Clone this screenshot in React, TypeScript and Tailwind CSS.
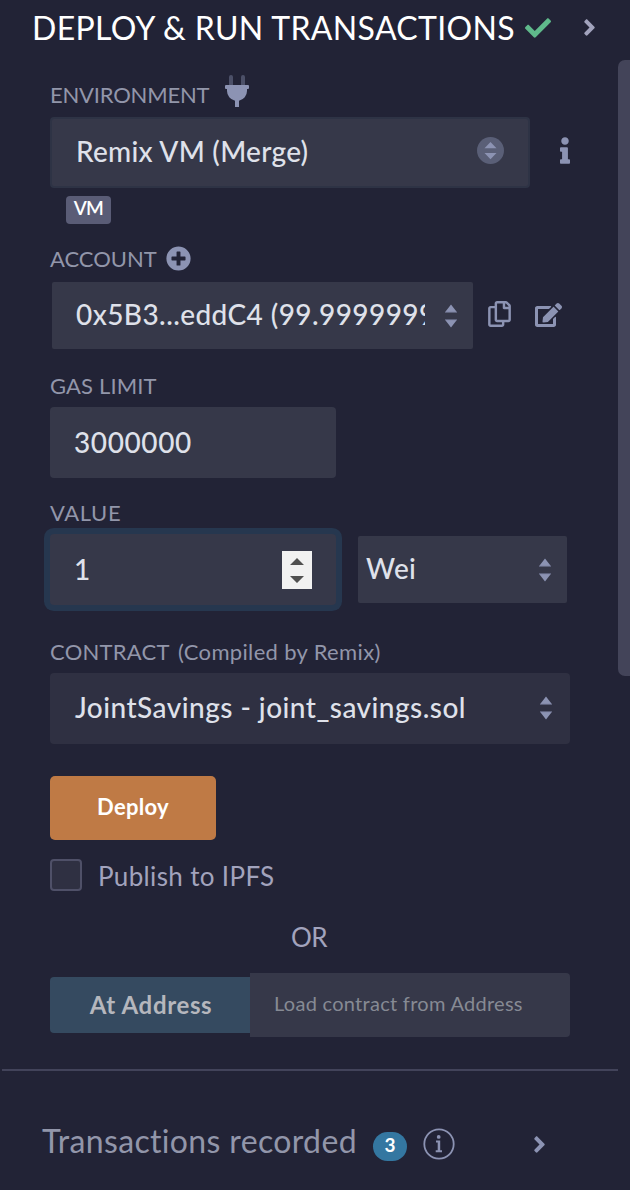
import type { ReactNode } from "react";
import { FaAngleRight, FaCheck, FaEdit, FaInfo, FaPlusCircle, FaRegCopy } from "react-icons/fa";

function PlugIcon() {
  return (
    <svg viewBox="0 0 384 512" className="h-8 w-6 shrink-0 fill-[#8c93b3]">
      <path
        className="opacity-40"
        d="M320 32a32 32 0 0 0-64 0v128h64zM128 32a32 32 0 0 0-64 0v128h64z"
      />
      <path d="M368 160H16a16 16 0 0 0-16 16v32a16 16 0 0 0 16 16h16v32a160.07 160.07 0 0 0 128 156.8V512h64v-99.200A160.07 160.07 0 0 0 352 256v-32h16a16 16 0 0 0 16-16v-32a16 16 0 0 0-16-16z" />
    </svg>
  );
}

function SortArrows() {
  return (
    <svg viewBox="0 0 12 24" className="h-6 w-3 shrink-0">
      <path d="M0 8.300 6 0.500l6 7.800zM0 15.700h12L6 23.500z" fill="#8c93b3" />
      <path d="M0 8.300h12M0 15.700h12" stroke="#6a6f8b" strokeWidth="0.800" />
    </svg>
  );
}

function CircledSort() {
  return (
    <svg viewBox="0 0 27 27" className="h-[27px] w-[27px] shrink-0">
      <circle cx="13.500" cy="13.500" r="13.500" fill="#5a5f77" />
      <path d="M7.500 11.200 13.500 5l6 6.200zM7.500 16h12l-6 6.200z" fill="#8c93b3" />
    </svg>
  );
}

function InfoCircle() {
  return (
    <svg viewBox="0 0 32 32" className="h-8 w-8 shrink-0">
      <circle cx="16" cy="16" r="14.700" fill="none" stroke="#8c93b3" strokeWidth="1.800" />
      <circle cx="15.700" cy="8.900" r="1.900" fill="#8c93b3" />
      <path d="M13 12.600h4.200v9.600h1.800v2h-6.300v-2h2v-7.600H13z" fill="#8c93b3" />
    </svg>
  );
}

function Label({ children, className }: { children: ReactNode; className: string }) {
  return (
    <div className={`flex items-center whitespace-pre text-[22px] leading-[26px] text-[#9296aa] ${className}`}>
      {children}
    </div>
  );
}

export default function App() {
  return (
    <div className="flex h-[1190px] w-[630px] flex-col overflow-hidden bg-[#222336] font-['Lato',sans-serif] text-[28px] text-[#dfe1ea]">
      <header className="flex h-[60px] shrink-0 items-start pl-8 text-white">
        <h1 className="w-[493px] whitespace-nowrap pt-[9px] text-[32px] leading-[38px] tracking-[0.34px]">
          DEPLOY &amp; RUN TRANSACTIONS
        </h1>
        <FaCheck className="mt-[15px] h-[26px] w-[26px] shrink-0 text-[#5fb98b]" />
        <FaAngleRight className="mt-[14px] ml-8 h-[27px] w-[13px] shrink-0 text-[#a2a3bd]" />
      </header>

      <div className="flex min-h-0 flex-1">
        <main className="flex w-[618px] shrink-0 flex-col">
          <section className="flex flex-col pl-[50px]">
            <Label className="mt-[15px] h-8">
              <span className="w-[175px] pt-[7px] tracking-[-0.2px]">ENVIRONMENT</span>
              <PlugIcon />
            </Label>
            <div className="mt-[10px] flex items-center">
              <div className="flex h-[71px] w-[480px] items-center justify-between rounded-[4px] border-2 border-[#2e3345] bg-[#363849] pr-[24px] pb-[4px] pl-[24px]">
                <span className="font-medium tracking-[0.27px]">Remix VM (Merge)</span>
                <CircledSort />
              </div>
              <FaInfo className="mb-1 ml-[30px] h-[27px] w-[10px] text-[#8c93b3]" />
            </div>
            <span className="mt-2 ml-4 flex h-7 w-[45px] items-center justify-center rounded-[4px] bg-[#5a5c76] pb-[3px] text-[19px] font-semibold tracking-[-0.6px] text-white">
              VM
            </span>

            <Label className="mt-[21px] h-[27px]">
              <span className="w-[116px]">ACCOUNT</span>
              <FaPlusCircle className="h-[25px] w-[25px] text-[#8c93b3]" />
            </Label>
            <div className="mt-[10px] ml-[2px] flex items-center">
              <div className="flex h-[67px] w-[421px] items-center rounded-[2px] bg-[#363849] pl-6">
                <span className="mb-[3px] w-[349px] overflow-hidden whitespace-nowrap font-medium tracking-[0.42px]">
                  0x5B3...eddC4 (99.99999999 ether)
                </span>
                <span className="ml-5">
                  <SortArrows />
                </span>
              </div>
              <FaRegCopy className="mb-[3px] ml-[15px] h-[26px] w-[23px] text-[#8c93b3]" />
              <FaEdit className="mb-[2px] ml-6 h-[24px] w-[27px] text-[#8c93b3]" />
            </div>

            <Label className="mt-[24px]">
              <span className="tracking-[0.14px]">GAS LIMIT</span>
            </Label>
            <div className="mt-2 flex h-[71px] w-[286px] items-center rounded-[4px] bg-[#363849] pb-[2px] pl-[24px] font-medium tracking-[0.6px]">
              3000000
            </div>

            <Label className="mt-[22px]">
              <span className="tracking-[0.6px]">VALUE</span>
            </Label>
            <div className="mt-2 flex items-center">
              <div className="flex h-[71px] w-[286px] items-center justify-between rounded-[4px] bg-[#363849] pr-6 pl-[24px] ring-[6px] ring-[#26374f]">
                <span className="mb-[2px] font-medium">1</span>
                <svg viewBox="0 0 30 38" className="h-[38px] w-[30px]">
                  <path d="M0 0h30v38H0z" fill="#f1f1f1" />
                  <path d="M8 14 15 7l7 7zM8 25h14l-7 7z" fill="#505050" />
                </svg>
              </div>
              <div className="ml-[22px] flex h-[67px] w-[209px] items-center justify-between rounded-[2px] bg-[#363849] pr-4 pl-2">
                <span className="mb-[3px] font-medium tracking-[0.4px]">Wei</span>
                <SortArrows />
              </div>
            </div>

            <Label className="mt-[34px]">
              <span className="w-[128px] tracking-[0.24px]">CONTRACT</span>
              <span className="tracking-[0.34px]">(Compiled by Remix)</span>
            </Label>
            <div className="mt-2 flex h-[71px] w-[520px] items-center justify-between rounded-[4px] bg-[#2f3042] pr-[18px] pb-[2px] pl-[25px]">
              <span className="mb-[2px] font-medium tracking-[0.47px]">JointSavings - joint_savings.sol</span>
              <SortArrows />
            </div>

            <button className="mt-8 flex h-16 w-[166px] items-center justify-center rounded-[5px] bg-[#bf7a45] pb-1 text-[22px] font-bold tracking-[0.3px] text-white">
              Deploy
            </button>
            <label className="mt-[19px] flex h-8 items-center text-[26px] text-[#a2a3bd]">
              <span className="h-8 w-8 rounded-[4px] border-2 border-[#4f5068] bg-[#2f3042]" />
              <span className="mt-[2px] ml-4 tracking-[0.35px]">Publish to IPFS</span>
            </label>
            <div className="mt-[30px] h-8 w-[518px] text-center text-[26px] leading-8 tracking-[-0.6px] text-[#a2a3bd]">
              OR
            </div>
            <div className="mt-5 flex h-16 items-center">
              <button className="h-14 w-[200px] rounded-l-[4px] bg-[#354a60] pb-px pl-[2px] text-[24px] font-bold tracking-[0.65px] text-[#b5b7bd]">
                At Address
              </button>
              <div className="flex h-16 w-[320px] items-center rounded-r-[4px] bg-[#363849] pb-1 pl-6 text-[20px] tracking-[0.28px] text-[#868a94]">
                Load contract from Address
              </div>
            </div>
          </section>

          <div className="mt-8 ml-[2px] h-[2px] bg-[#42435a]" />

          <section className="mt-[53px] flex h-10 items-center pl-[42px] text-[32px] text-[#9296aa]">
            <span className="mb-[6px] w-[331px] whitespace-nowrap tracking-[0.35px]">Transactions recorded</span>
            <span className="mt-[5px] flex h-[29px] w-[34px] items-center justify-center rounded-full bg-[#3477a1] pb-[2px] text-[19px] font-bold text-white">
              3
            </span>
            <span className="ml-4">
              <InfoCircle />
            </span>
            <FaAngleRight className="ml-[78px] h-[27px] w-[13px] text-[#8c93b3]" />
          </section>
        </main>
        <div className="h-[616px] w-3 rounded-l-[7px] bg-[#434459]" />
      </div>
    </div>
  );
}
